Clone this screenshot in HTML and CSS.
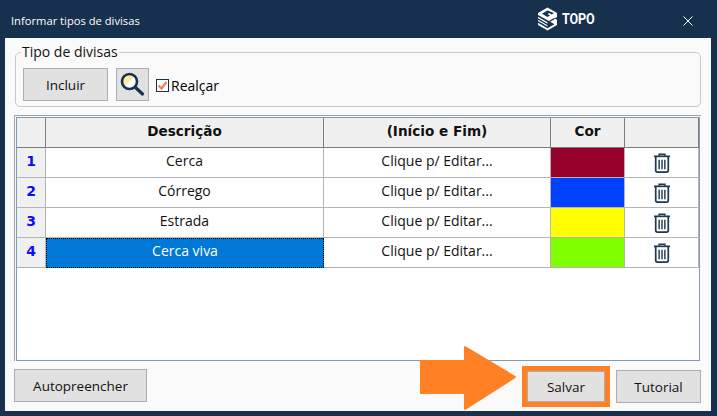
FILE: index.html
```html
<!DOCTYPE html>
<html lang="pt">
<head>
<meta charset="utf-8">
<title>Informar tipos de divisas</title>
<link rel="stylesheet" href="styles.css">
</head>
<body>
<div class="window">
  <header class="titlebar">
    <span class="title">Informar tipos de divisas</span>
    <div class="brand">
      <svg class="logo" width="21" height="24" viewBox="0 0 21 24">
        <path fill="#fff" d="M10.500 0.500 20 6v4l-2.400 1.400 2.400 1.400V18l-9.500 5.500L1 18v-2.200l9.500 5.400 7-4-7-4L1 8V6z"/>
        <path fill="#16304d" d="M10.500 3.500 5 6.700l5.500 3.200 2.500-1.500-2.500-1.400 1.700-1 2.500 1.400 2.300-1.300z"/>
        <path fill="#16304d" d="M3 10.400l7.500 4.300 7-4v1.600l-7 4L3 12z"/>
        <path fill="#fff" d="M1 9.800l9.500 5.500v1.500L1 11.300zM1 12.700l9.500 5.500v1.400L1 14.100z"/>
      </svg>
      <span class="brand-name">TOPO</span>
    </div>
    <svg class="close" width="10" height="10" viewBox="0 0 10 10"><path d="M0.500 0.500l9 9M9.500 0.500l-9 9" stroke="#fff" stroke-width="1" fill="none"/></svg>
  </header>

  <main class="panel">
    <fieldset class="group">
      <legend class="group-title">Tipo de divisas</legend>
      <button class="btn btn-include" type="button">Incluir</button>
      <button class="btn btn-search" type="button" aria-label="Buscar">
        <svg width="28" height="28" viewBox="0 0 28 28">
          <circle cx="10.500" cy="10.500" r="7" fill="#fff"/>
          <path d="M5.500 15.500A7 7 0 0 1 15.500 5.500z" fill="#fde9a8"/>
          <circle cx="10.500" cy="10.500" r="7.500" fill="none" stroke="#14324f" stroke-width="2.600"/>
          <path d="M16.500 16.500l7 6.500" stroke="#14324f" stroke-width="3.200" stroke-linecap="round"/>
        </svg>
      </button>
      <label class="check">
        <span class="check-box">
          <svg width="11" height="11" viewBox="0 0 11 11"><path d="M1.500 5.500l3 3 5-6.500" stroke="#f58250" stroke-width="2.200" fill="none"/></svg>
        </span>
        <span>Realçar</span>
      </label>
    </fieldset>

    <div class="grid-well">
      <div class="grid-frame">
        <table class="grid">
          <colgroup>
            <col class="c-num"><col class="c-desc"><col class="c-edit"><col class="c-color"><col class="c-del">
          </colgroup>
          <thead>
            <tr><th></th><th>Descrição</th><th>(Início e Fim)</th><th>Cor</th><th></th></tr>
          </thead>
          <tbody>
            <tr>
              <th class="num">1</th><td>Cerca</td><td>Clique p/ Editar...</td><td class="swatch s-red"></td>
              <td class="del"><svg class="trash" width="18" height="20" viewBox="0 0 18 21"><use href="#trash"/></svg></td>
            </tr>
            <tr>
              <th class="num">2</th><td>Córrego</td><td>Clique p/ Editar...</td><td class="swatch s-blue"></td>
              <td class="del"><svg class="trash" width="18" height="20" viewBox="0 0 18 21"><use href="#trash"/></svg></td>
            </tr>
            <tr>
              <th class="num">3</th><td>Estrada</td><td>Clique p/ Editar...</td><td class="swatch s-yellow"></td>
              <td class="del"><svg class="trash" width="18" height="20" viewBox="0 0 18 21"><use href="#trash"/></svg></td>
            </tr>
            <tr>
              <th class="num">4</th><td class="selected">Cerca viva</td><td>Clique p/ Editar...</td><td class="swatch s-green"></td>
              <td class="del"><svg class="trash" width="18" height="20" viewBox="0 0 18 21"><use href="#trash"/></svg></td>
            </tr>
          </tbody>
        </table>
      </div>
    </div>

    <footer class="actions">
      <button class="btn btn-auto" type="button">Autopreencher</button>
      <button class="btn btn-save" type="button">Salvar</button>
      <button class="btn btn-tutorial" type="button">Tutorial</button>
    </footer>
  </main>

  <svg class="arrow" width="98" height="64" viewBox="0 0 98 64">
    <path fill="#ff8124" stroke="#ff8124" stroke-width="2" stroke-linejoin="round" d="M2 15H46V1L96 31 46 63V47H2z"/>
  </svg>
</div>

<svg class="defs" width="0" height="0">
  <defs>
    <g id="trash" fill="none" stroke="#1d3850">
      <path stroke-width="1.600" d="M6 3V1.300h6V3"/>
      <path stroke-width="1.800" d="M0.600 3.500h16.800"/>
      <path stroke-width="1.800" d="M2.400 4v14.200q0 1.900 1.900 1.900h9.400q1.900 0 1.900-1.900V4"/>
      <path stroke-width="1.500" d="M6 7v10M9 7v10M12 7v10"/>
    </g>
  </defs>
</svg>
</body>
</html>
```
FILE: styles.css
```css
* { box-sizing: border-box; }

html, body {
  margin: 0;
  padding: 0;
  width: 717px;
  height: 416px;
  overflow: hidden;
}

body {
  background: #16304d;
  font-family: "Open Sans", "Noto Sans", sans-serif;
  color: #000;
}

.window {
  position: relative;
  width: 717px;
  height: 416px;
  display: flex;
  flex-direction: column;
  padding: 0 6px 5px 5px;
}

.defs { position: absolute; }

.titlebar {
  height: 38px;
  flex: none;
  display: flex;
  align-items: center;
  color: #fff;
  padding: 2px 18px 0 6px;
}

.title { font-size: 11.200px; flex: 1; }

.brand {
  display: flex;
  align-items: center;
  gap: 4px;
  margin-right: 89px;
  margin-top: -2px;
}

.brand-name {
  font-family: "Roboto", sans-serif;
  font-weight: 700;
  font-size: 14px;
  letter-spacing: -0.200px;
  display: inline-block;
  width: 32px;
  transform: scaleX(0.900);
  transform-origin: left center;
}

.close { margin-top: 1px; }

.panel {
  flex: 1;
  background: #fafafa;
  display: flex;
  flex-direction: column;
  padding: 0 10px 0 9px;
}

.group {
  margin: 6px 0 0 1px;
  padding: 8px 0 0 7px;
  height: 63px;
  border: 1px solid #c9c9c9;
  border-radius: 5px;
  display: flex;
  align-items: flex-start;
  min-width: 0;
}

.group-title {
  font-size: 14px;
  line-height: 16px;
  padding: 0 1px;
  margin-left: -2px;
  color: #111;
}

.btn {
  font-family: inherit;
  font-size: 13.500px;
  color: #111;
  background: #e1e1e1;
  border: 1px solid #adadad;
  border-radius: 0;
  height: 33px;
  padding: 0;
}

.btn-include { width: 85px; }

.btn-search {
  width: 33px;
  margin-left: 8px;
  display: flex;
  align-items: center;
  justify-content: center;
}

.check {
  display: flex;
  align-items: center;
  font-size: 14px;
  margin-left: 7px;
  margin-top: 9px;
  gap: 2px;
  height: 16px;
}

.check-box {
  width: 13px;
  height: 13px;
  border: 1px solid #14324f;
  background: #fff;
  display: flex;
  align-items: center;
  justify-content: center;
}

.grid-well {
  margin-top: 8px;
  height: 246px;
  flex: none;
  border-left: 1px solid #a0a0a0;
  border-top: 1px solid #a0a0a0;
  padding: 1px 1px 0 1px;
  width: 687px;
}

.grid-frame {
  width: 684px;
  height: 244px;
  background: #fff;
  border: 1px solid #7f9db9;
}

.grid {
  border-collapse: separate;
  border-spacing: 0;
  table-layout: fixed;
  width: 682px;
  font-size: 14px;
}

.c-num { width: 29px; }
.c-desc { width: 278px; }
.c-edit { width: 227px; }
.c-color, .c-del { width: 74px; }

.grid tr { height: 30px; }

.grid th, .grid td {
  padding: 0;
  text-align: center;
  border-right: 1px solid #b4b4b4;
  border-bottom: 1px solid #b4b4b4;
  color: #111;
  font-weight: 400;
}

.grid td { padding-bottom: 4px; }

.grid thead th {
  background: #f0f0f0;
  border-color: #7d7d7d;
  font-family: "DejaVu Sans", sans-serif;
  font-size: 13.600px;
  font-weight: 700;
  padding-bottom: 4px;
}

.grid .num {
  background: #f0f0f0;
  color: #0a0aff;
  font-family: "DejaVu Sans", sans-serif;
  font-size: 14px;
  font-weight: 700;
  padding-bottom: 4px;
}

.grid .selected {
  background: #0078d7;
  color: #fff;
  outline: 1px dotted #000;
  outline-offset: -1px;
  border: 1px dotted #000;
  padding-bottom: 6px;
}

.grid .swatch { padding: 0; }
.s-red { background: #96002a; }
.s-blue { background: #0040ff; }
.s-yellow { background: #ffff00; }
.s-green { background: #80ff00; }

.grid .del { padding: 1px 0 0; line-height: 0; }
.trash { display: inline-block; vertical-align: middle; }

.actions {
  flex: none;
  margin-top: 8px;
  display: flex;
  align-items: flex-start;
}

.btn-auto { width: 133px; }

.btn-save {
  width: 78px;
  margin-left: auto;
  height: 31px;
  margin-top: 2px;
  outline: 5px solid #ff8124;
  outline-offset: 0;
}

.btn-tutorial {
  width: 85px;
  margin-left: 11px;
  margin-top: 1px;
}

.arrow {
  position: absolute;
  left: 419px;
  top: 346px;
}
```
